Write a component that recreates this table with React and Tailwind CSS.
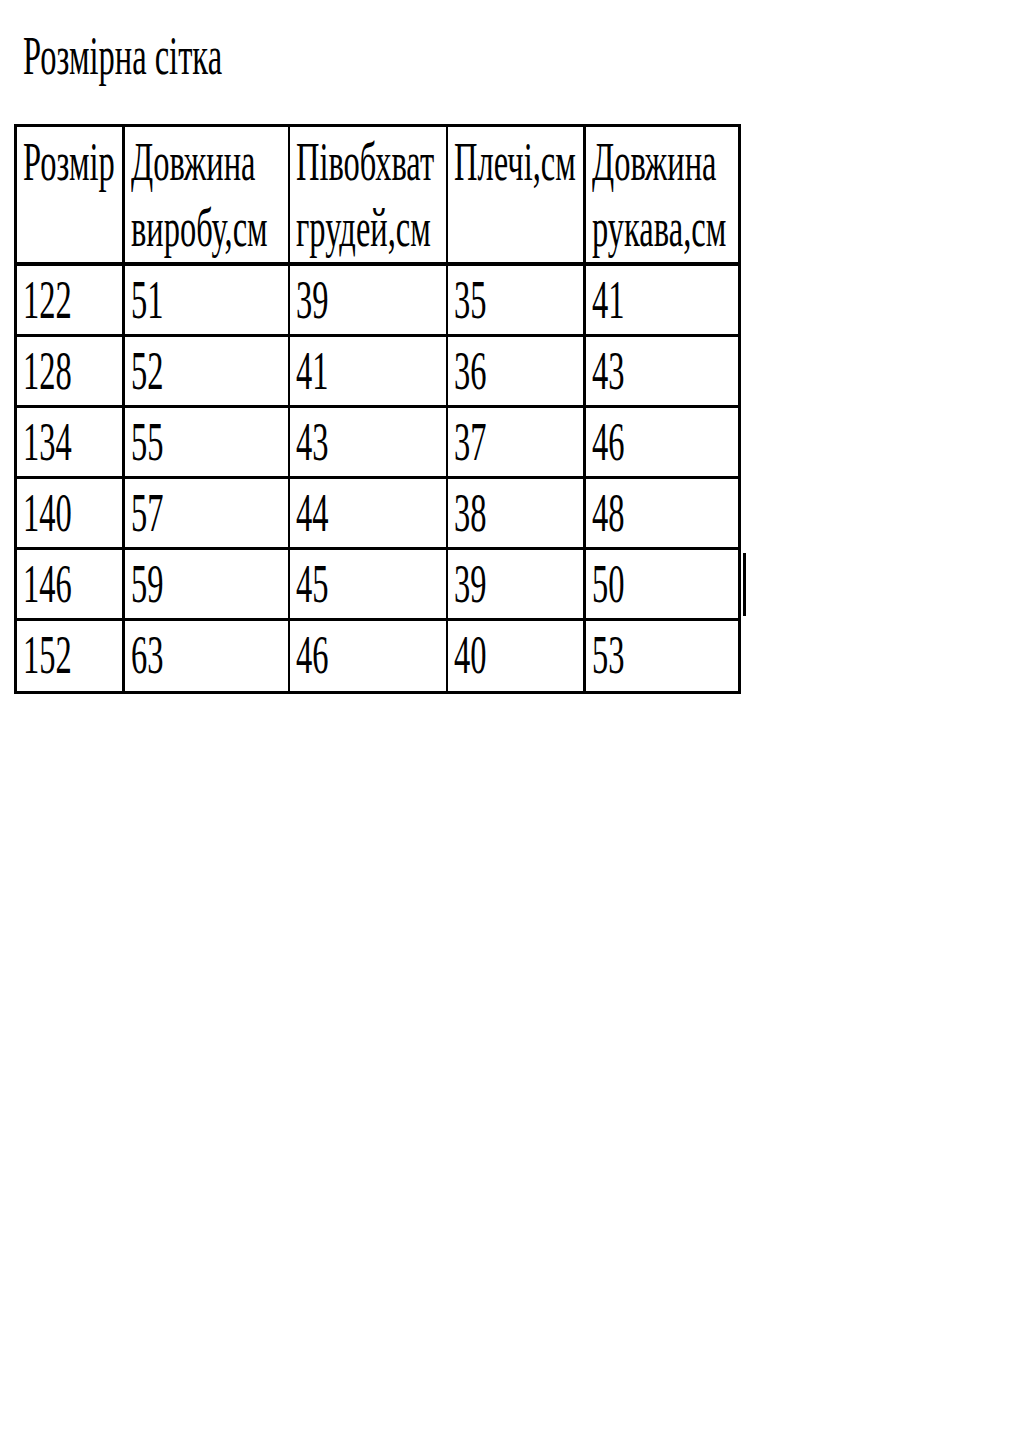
const header = [
  ['Розмір'],
  ['Довжина', 'виробу,см'],
  ['Півобхват', 'грудей,см'],
  ['Плечі,см'],
  ['Довжина', 'рукава,см'],
]

const rows = [
  ['122', '51', '39', '35', '41'],
  ['128', '52', '41', '36', '43'],
  ['134', '55', '43', '37', '46'],
  ['140', '57', '44', '38', '48'],
  ['146', '59', '45', '39', '50'],
  ['152', '63', '46', '40', '53'],
]

// right border per column
const colBorder = ['border-r-[3px]', 'border-r-2', 'border-r-2', 'border-r-[3px]', '']

const Txt = ({ children }) => (
  <span className="block origin-top-left scale-y-[1.7] text-[32.5px] leading-[39px] text-black whitespace-nowrap">
    {children}
  </span>
)

export default function App() {
  return (
    <div className="min-h-[1440px] w-[1035px] bg-white font-['Liberation_Serif','Times_New_Roman',serif]">
      <div className="relative px-[14px]">
        <div className="h-[124px] pt-[23px] pl-[9px]">
          <Txt>Розмірна сітка</Txt>
        </div>

        <div className="grid w-[727px] grid-cols-[108px_165px_158px_138px_152px] border-[3px] border-black">
          {header.map((lines, i) => (
            <div key={i} className={`h-[139px] border-b-4 border-black pl-[6px] pt-[2px] ${colBorder[i]}`}>
              <Txt>
                {lines[0]}
                {lines[1] && <br />}
                {lines[1]}
              </Txt>
            </div>
          ))}
          {rows.map((row, r) =>
            row.map((v, i) => (
              <div
                key={r + '-' + i}
                className={`border-black pl-[6px] pt-[1px] ${colBorder[i]} ${
                  r === rows.length - 1 ? 'h-[70px]' : 'h-[71px] border-b-[3px]'
                }`}
              >
                <Txt>{v}</Txt>
              </div>
            ))
          )}
        </div>

        {/* stray line next to the 146 row */}
        <div className="absolute left-[743px] top-[553px] h-[63px] w-[3px] bg-black" />
      </div>
    </div>
  )
}
